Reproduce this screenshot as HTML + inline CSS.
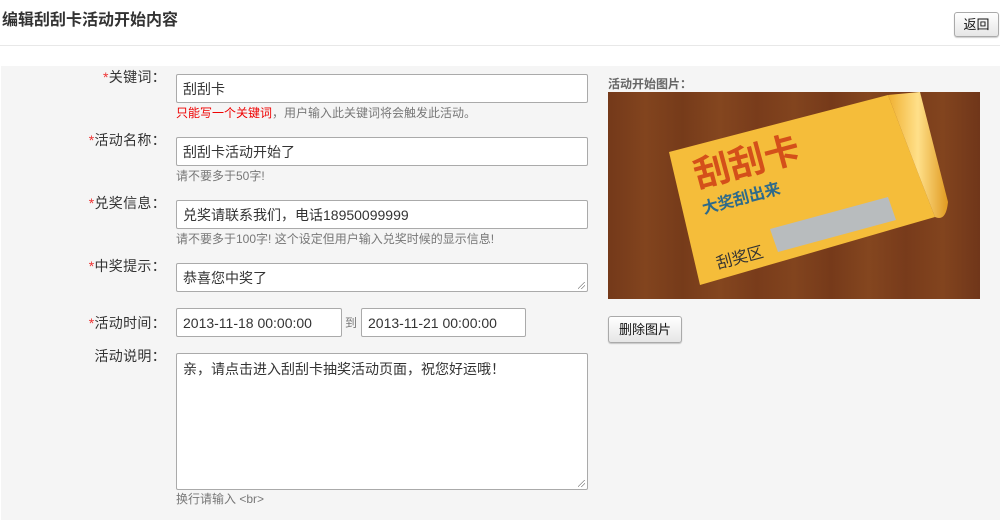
<!DOCTYPE html>
<html><head><meta charset="utf-8"><style>
*{margin:0;padding:0;box-sizing:border-box}
body{width:1000px;height:520px;background:#fff;position:relative;overflow:hidden;font-family:"Liberation Sans","Noto Sans CJK SC",sans-serif;font-size:13px;color:#333}
.a{position:absolute}
h1{position:absolute;left:2px;top:6px;font-size:16px;font-weight:bold;color:#333}
.hr{left:0;top:45px;width:1000px;height:1px;background:#e8e8e8}
.bg{left:1px;top:66px;width:999px;height:454px;background:#f5f5f5}
.btn{background:linear-gradient(#fff,#e6e6e6);border:1px solid #aaa;border-radius:3px;font-size:13px;color:#111;text-align:center;box-shadow:0 1px 1px rgba(0,0,0,.2)}
.lab{width:166px;text-align:right;left:0;font-size:14px;color:#333;letter-spacing:0.3px}
.lab b{color:#e33;font-weight:normal}
.in{background:#fff;border:1px solid #aaa;border-radius:2px;font-size:14px;color:#333;padding:0 6px;line-height:28px}
.tip{font-size:12px;color:#777;left:176px}
.rz{position:absolute;right:2px;bottom:2px;width:7px;height:7px;background:linear-gradient(135deg,transparent 45%,#888 46%,#888 52%,transparent 53%,transparent 70%,#888 71%,#888 77%,transparent 78%)}
</style></head><body>
<h1>编辑刮刮卡活动开始内容</h1>
<div class="a btn" style="left:954px;top:12px;width:45px;height:25px;line-height:23px">返回</div>
<div class="a hr"></div>
<div class="a bg"></div>

<div class="a lab" style="top:67px"><b>*</b>关键词：</div>
<div class="a in" style="left:176px;top:74px;width:412px;height:29px">刮刮卡</div>
<div class="a tip" style="top:104px"><span style="color:#e00">只能写一个关键词</span>，用户输入此关键词将会触发此活动。</div>

<div class="a lab" style="top:130px"><b>*</b>活动名称：</div>
<div class="a in" style="left:176px;top:137px;width:412px;height:29px">刮刮卡活动开始了</div>
<div class="a tip" style="top:167px">请不要多于50字!</div>

<div class="a lab" style="top:193px"><b>*</b>兑奖信息：</div>
<div class="a in" style="left:176px;top:200px;width:412px;height:29px">兑奖请联系我们，电话18950099999</div>
<div class="a tip" style="top:230px">请不要多于100字! 这个设定但用户输入兑奖时候的显示信息!</div>

<div class="a lab" style="top:256px"><b>*</b>中奖提示：</div>
<div class="a in" style="left:176px;top:263px;width:412px;height:29px">恭喜您中奖了<div class="rz"></div></div>

<div class="a lab" style="top:313px"><b>*</b>活动时间：</div>
<div class="a in" style="left:176px;top:308px;width:166px;height:29px">2013-11-18 00:00:00</div>
<div class="a" style="left:345px;top:314px;font-size:12px;color:#777">到</div>
<div class="a in" style="left:361px;top:308px;width:165px;height:29px">2013-11-21 00:00:00</div>

<div class="a lab" style="top:346px">活动说明：</div>
<div class="a in" style="left:176px;top:353px;width:412px;height:137px;line-height:30px">亲，请点击进入刮刮卡抽奖活动页面，祝您好运哦！<div class="rz"></div></div>
<div class="a tip" style="top:490px">换行请输入 &lt;br&gt;</div>

<div class="a" style="left:608px;top:75px;font-size:12px;font-weight:bold;color:#666">活动开始图片：</div>
<svg class="a" style="left:608px;top:92px" width="372" height="207" viewBox="0 0 372 207">
<defs>
<linearGradient id="w" x1="0" x2="1"><stop offset="0" stop-color="#74391a"/><stop offset=".1" stop-color="#82441e"/><stop offset=".2" stop-color="#763b1a"/><stop offset=".3" stop-color="#84461f"/><stop offset=".4" stop-color="#793c1b"/><stop offset=".5" stop-color="#82441e"/><stop offset=".6" stop-color="#763a1a"/><stop offset=".7" stop-color="#84461f"/><stop offset=".8" stop-color="#783b1b"/><stop offset=".9" stop-color="#82441e"/><stop offset="1" stop-color="#70361a"/></linearGradient>
<linearGradient id="c" x1="0" x2="1"><stop offset="0" stop-color="#f0b030"/><stop offset=".5" stop-color="#ffe08a"/><stop offset="1" stop-color="#e09a20"/></linearGradient>
</defs>
<rect width="372" height="207" fill="url(#w)"/>
<polygon points="61,60 280,3 327,125 92,193" fill="#f5bd3a"/>
<path d="M280,3 L312,0 L340,110 Q338,130 327,125 Z" fill="url(#c)"/>
<polygon points="162,137 280,105 288,128 170,160" fill="#b8bcbe"/>
<text x="0" y="0" transform="translate(90,96) rotate(-15)" font-size="36" font-weight="bold" fill="#d4501a" font-family="Noto Sans CJK SC,sans-serif">刮刮卡</text>
<text x="0" y="0" transform="translate(96,122) rotate(-15)" font-size="16" font-weight="bold" fill="#2e6a8a" font-family="Noto Sans CJK SC,sans-serif">大奖刮出来</text>
<text x="0" y="0" transform="translate(110,177) rotate(-15)" font-size="16" fill="#333" font-family="Noto Sans CJK SC,sans-serif">刮奖区</text>
</svg>
<div class="a btn" style="left:608px;top:316px;width:74px;height:27px;line-height:25px">删除图片</div>
</body></html>
